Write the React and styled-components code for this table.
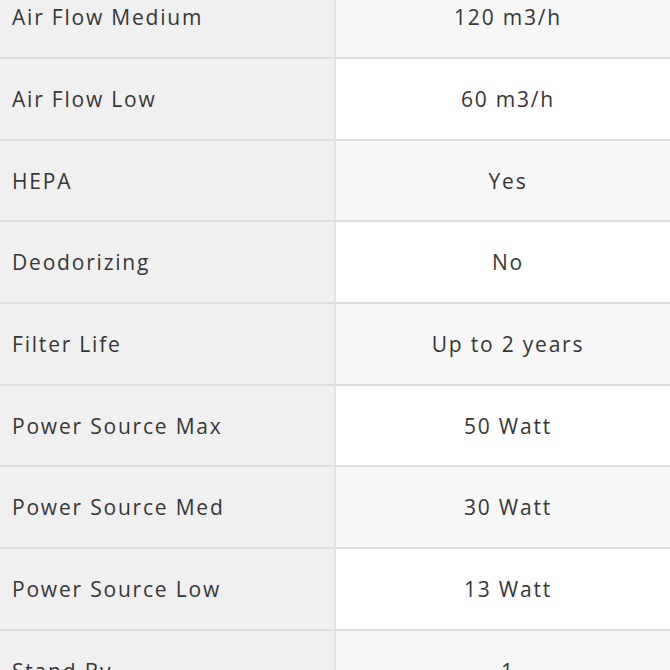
import React from 'react';
import styled, { createGlobalStyle } from 'styled-components';

const GlobalStyle = createGlobalStyle`
  html, body {
    margin: 0;
    padding: 0;
    background: #ffffff;
    overflow: hidden;
  }
`;

const Table = styled.div`
  width: 670px;
  margin-top: -22.7px;
  display: flex;
  flex-direction: column;
  font-family: "Open Sans", "Liberation Sans", sans-serif;
  font-size: 21px;
  letter-spacing: 1.8px;
  color: #363636;
`;

const Row = styled.div`
  display: grid;
  grid-template-columns: 334px 2px 1fr;
  height: 79.7px;
  border-bottom: 2px solid #dedede;
`;

const Label = styled.div`
  display: flex;
  align-items: center;
  padding-left: 12px;
  background: #f0f0f0;
`;

const Divider = styled.div`
  background: #e2e2e2;
`;

const Value = styled.div`
  display: flex;
  align-items: center;
  justify-content: center;
  padding-left: 10px;
  background: ${(p) => (p.$striped ? '#f7f7f7' : '#ffffff')};
`;

const specs = [
  ['Air Flow Medium', '120 m3/h'],
  ['Air Flow Low', '60 m3/h'],
  ['HEPA', 'Yes'],
  ['Deodorizing', 'No'],
  ['Filter Life', 'Up to 2 years'],
  ['Power Source Max', '50 Watt'],
  ['Power Source Med', '30 Watt'],
  ['Power Source Low', '13 Watt'],
  ['Stand By', '1'],
];

const App = () => (
  <>
    <GlobalStyle />
    <Table>
      {specs.map(([label, value], i) => (
        <Row key={label}>
          <Label>{label}</Label>
          <Divider />
          <Value $striped={i % 2 === 0}>{value}</Value>
        </Row>
      ))}
    </Table>
  </>
);

export default App;
